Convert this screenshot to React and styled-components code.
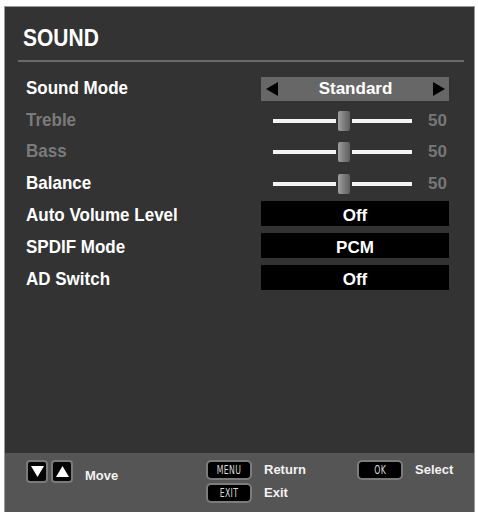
import React from 'react';
import styled, { createGlobalStyle } from 'styled-components';

const GlobalStyle = createGlobalStyle`
  html, body {
    margin: 0;
    padding: 0;
    background: #fff;
    height: 512px;
    overflow: hidden;
  }
  body {
    font-family: "Liberation Sans", Arial, sans-serif;
  }
`;

const Page = styled.div`
  padding: 6px 3px 0 4px;
`;

const Panel = styled.section`
  width: 469px;
  height: 505px;
  background: #333;
  border: 1px solid #9a9a9a;
  display: flex;
  flex-direction: column;
`;

const Header = styled.header`
  padding: 17px 10px 0 13px;
`;

const Title = styled.h1`
  margin: 0 0 0 5px;
  font-size: 21px;
  line-height: 28px;
  font-weight: bold;
  color: #fff;
  transform: scaleY(1.12);
  transform-origin: left center;
`;

const Divider = styled.hr`
  margin: 8px 0 0;
  border: 0;
  height: 2px;
  background: #6a6a6a;
`;

const List = styled.div`
  padding-top: 11px;
  flex: 1;
`;

const Row = styled.div`
  display: grid;
  grid-template-columns: 1fr 188px;
  align-items: center;
  height: 31.8px;
  padding: 0 25px 0 21px;
`;

const Label = styled.span`
  font-size: 17px;
  font-weight: bold;
  color: ${(p) => (p.$disabled ? '#7a7a7a' : '#fff')};
  transform: scaleY(1.08);
  transform-origin: left center;
`;

const Selector = styled.div`
  display: flex;
  align-items: center;
  justify-content: space-between;
  height: 24px;
  padding: 0 4px 0 5px;
  background: #676767;
  font-size: 17px;
  font-weight: bold;
  color: #fff;
`;

const Arrow = styled.svg`
  width: 12px;
  height: 14px;
  fill: #000;
`;

const OptionBox = styled.div`
  height: 25px;
  line-height: 25px;
  padding-top: 2px;
  box-sizing: border-box;
  background: #000;
  color: #fff;
  text-align: center;
  font-size: 17px;
  font-weight: bold;
  margin-top: -5px;
`;

const Slider = styled.div`
  display: flex;
  align-items: center;
  padding-left: 12px;
`;

const Track = styled.div`
  position: relative;
  width: 139px;
  height: 4px;
  background: #f4f4f4;
`;

const Thumb = styled.div`
  position: absolute;
  left: 65px;
  top: -8px;
  width: 12px;
  height: 20px;
  border-radius: 2px;
  background: linear-gradient(90deg, #a0a0a0, #767676 60%, #5e5e5e);
  box-shadow: 0 0 0 2px #333;
`;

const Value = styled.span`
  flex: 1;
  text-align: right;
  padding-right: 2px;
  font-size: 17px;
  font-weight: bold;
  color: #777;
`;

const Footer = styled.footer`
  height: 59px;
  background: #555;
  display: flex;
  padding: 7px 0 0 21px;
  box-sizing: border-box;
  flex-shrink: 0;
`;

const Group = styled.div`
  display: flex;
  align-items: flex-start;
  width: ${(p) => p.$w || 'auto'};
`;

const Keys = styled.div`
  display: flex;
  gap: 3px;
  height: 23px;
`;

const ArrowKey = styled.div`
  width: 22px;
  height: 23px;
  box-sizing: border-box;
  background: #050505;
  border: 2px solid #7a7a7a;
  border-radius: 4px;
  display: flex;
  align-items: center;
  justify-content: center;
  & svg {
    width: 13px;
    height: 11px;
    fill: #fff;
  }
`;

const HintText = styled.span`
  font-size: 13px;
  font-weight: bold;
  color: #f2f2f2;
  line-height: 20px;
  margin-left: ${(p) => p.$gap || '12px'};
  margin-top: ${(p) => p.$top || '0'};
`;

const KeyStack = styled.div`
  display: grid;
  grid-template-columns: auto auto;
  row-gap: 3px;
  align-items: center;
`;

const KeyButton = styled.div`
  width: 46px;
  height: 20px;
  box-sizing: border-box;
  background: #000;
  border: 2px solid #7c7c7c;
  border-radius: 5px;
  display: flex;
  align-items: center;
  justify-content: center;
  & span {
    font-family: "DejaVu Sans Condensed", "DejaVu Sans", sans-serif;
    font-size: 12px;
    color: #d8d8d8;
    transform: scaleX(0.72);
    letter-spacing: 0.5px;
  }
`;

const Tri = ({ dir }) => (
  <svg viewBox="0 0 13 11">
    {dir === 'down' ? <polygon points="0,0 13,0 6.5,11" /> : <polygon points="0,11 13,11 6.5,0" />}
  </svg>
);

function SliderRow({ label, value, disabled }) {
  return (
    <Row>
      <Label $disabled={disabled}>{label}</Label>
      <Slider>
        <Track>
          <Thumb />
        </Track>
        <Value>{value}</Value>
      </Slider>
    </Row>
  );
}

export default function App() {
  return (
    <Page>
      <GlobalStyle />
      <Panel>
        <Header>
          <Title>SOUND</Title>
          <Divider />
        </Header>
        <List>
          <Row>
            <Label>Sound Mode</Label>
            <Selector>
              <Arrow viewBox="0 0 12 14">
                <polygon points="12,0 12,14 0,7" />
              </Arrow>
              <span>Standard</span>
              <Arrow viewBox="0 0 12 14">
                <polygon points="0,0 0,14 12,7" />
              </Arrow>
            </Selector>
          </Row>
          <SliderRow label="Treble" value="50" disabled />
          <SliderRow label="Bass" value="50" disabled />
          <SliderRow label="Balance" value="50" />
          <Row>
            <Label>Auto Volume Level</Label>
            <OptionBox>Off</OptionBox>
          </Row>
          <Row>
            <Label>SPDIF Mode</Label>
            <OptionBox>PCM</OptionBox>
          </Row>
          <Row>
            <Label>AD Switch</Label>
            <OptionBox>Off</OptionBox>
          </Row>
        </List>
        <Footer>
          <Group $w="180px">
            <Keys>
              <ArrowKey><Tri dir="down" /></ArrowKey>
              <ArrowKey><Tri dir="up" /></ArrowKey>
            </Keys>
            <HintText $top="6px">Move</HintText>
          </Group>
          <Group $w="151px">
            <KeyStack>
              <KeyButton><span>MENU</span></KeyButton>
              <HintText>Return</HintText>
              <KeyButton><span>EXIT</span></KeyButton>
              <HintText>Exit</HintText>
            </KeyStack>
          </Group>
          <Group>
            <KeyButton><span>OK</span></KeyButton>
            <HintText>Select</HintText>
          </Group>
        </Footer>
      </Panel>
    </Page>
  );
}
